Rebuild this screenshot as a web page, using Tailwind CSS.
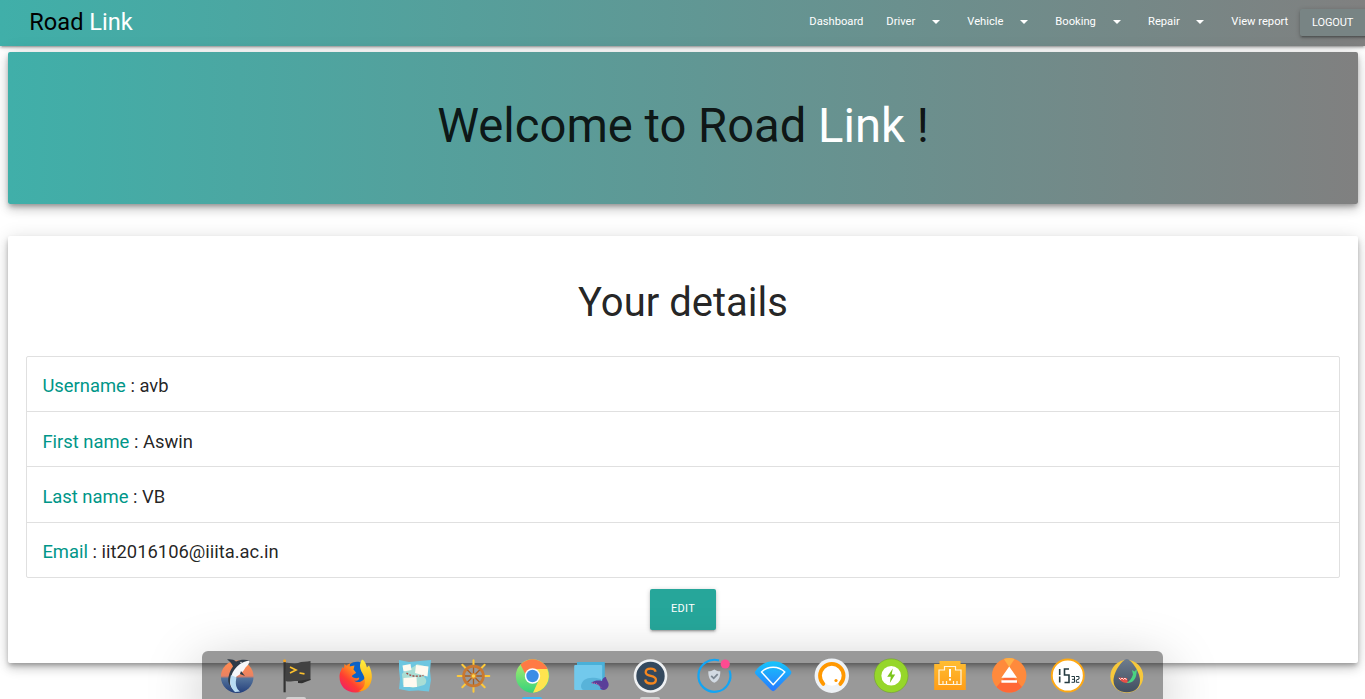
<!DOCTYPE html>
<html lang="en">
<head>
<meta charset="utf-8">
<title>Road Link</title>
<script src="https://cdn.jsdelivr.net/npm/@tailwindcss/browser@4"></script>
</head>
<body class="h-[699px] overflow-hidden bg-white font-['Roboto',sans-serif] text-black/87">
<nav class="flex h-[46px] overflow-hidden bg-linear-to-r/srgb from-[#40afa9] to-[#808080] text-[11.2px] leading-[44px] text-white shadow-[0_2px_2px_0_rgba(0,0,0,.14),0_3px_1px_-2px_rgba(0,0,0,.12),0_1px_5px_0_rgba(0,0,0,.2)]">
  <a class="pl-[29.3px] text-[23.6px] leading-[44px] whitespace-nowrap"><span class="text-black">Road</span> Link</a>
  <div class="ml-auto flex shrink-0 whitespace-nowrap -mr-[12px]">
    <a class="w-[77px] pl-[11.3px]">Dashboard</a>
    <a class="flex w-[81px] items-start pl-[11.3px]">Driver<svg class="mt-5 mr-4 ml-auto h-1 w-2" viewBox="0 0 8 4"><path d="M0 0h8L4 4z" fill="#fff"/></svg></a>
    <a class="flex w-[88px] items-start pl-[11.3px]">Vehicle<svg class="mt-5 mr-4 ml-auto h-1 w-2" viewBox="0 0 8 4"><path d="M0 0h8L4 4z" fill="#fff"/></svg></a>
    <a class="flex w-[93px] items-start pl-[11.3px]">Booking<svg class="mt-5 mr-4 ml-auto h-1 w-2" viewBox="0 0 8 4"><path d="M0 0h8L4 4z" fill="#fff"/></svg></a>
    <a class="flex w-[83px] items-start pl-[11px]">Repair<svg class="mt-5 mr-4 ml-auto h-1 w-2" viewBox="0 0 8 4"><path d="M0 0h8L4 4z" fill="#fff"/></svg></a>
    <a class="w-[80px] pl-[11.3px]">View report</a>
    <button class="mt-[9px] h-[27px] w-[77px] rounded-[2px] bg-[#788484] pl-[12px] text-left text-[11px] leading-[27px] tracking-[-.1px] shadow-[0_2px_2px_0_rgba(0,0,0,.14),0_3px_1px_-2px_rgba(0,0,0,.12),0_1px_5px_0_rgba(0,0,0,.2)]">LOGOUT</button>
  </div>
</nav>
<main class="px-2 pr-[7px] pt-[6px]">
  <section class="h-[152px] rounded-[2px] bg-linear-to-r/srgb from-[#40afa9] to-[#808080] pt-[44px] text-center shadow-[0_6px_10px_0_rgba(0,0,0,.14),0_1px_18px_0_rgba(0,0,0,.12),0_3px_5px_-1px_rgba(0,0,0,.3)]">
    <h1 class="text-[47.2px] leading-[60px]">Welcome to Road <span class="text-white">Link</span> !</h1>
  </section>
  <section class="mt-8 flex h-[427px] flex-col items-center rounded-[2px] bg-white px-[18px] pt-[41px] shadow-[0_6px_10px_0_rgba(0,0,0,.14),0_1px_18px_0_rgba(0,0,0,.12),0_3px_5px_-1px_rgba(0,0,0,.3)]">
    <h2 class="h-[79px] text-[40px] leading-[52px]">Your details</h2>
    <ul class="grid h-[222px] w-full grid-rows-[55px_55px_56px_54px] rounded-[2px] border border-[#e0e0e0] text-[18.4px] leading-[57px]">
      <li class="border-b border-[#e0e0e0] pl-[15.4px]"><span class="text-[#009688]">Username</span> : avb</li>
      <li class="border-b border-[#e0e0e0] pl-[15.4px] leading-[59px]"><span class="text-[#009688]">First name</span> : Aswin</li>
      <li class="border-b border-[#e0e0e0] pl-[15.4px] leading-[59px]"><span class="text-[#009688]">Last name</span> : VB</li>
      <li class="pl-[15.4px]"><span class="text-[#009688]">Email</span> : iit2016106@iiita.ac.in</li>
    </ul>
    <button class="mt-[11px] h-[41px] w-[66px] rounded-[2px] bg-[#26a69a] pb-[1px] text-[11px] leading-[16px] tracking-[.3px] text-white shadow-[0_2px_2px_0_rgba(0,0,0,.14),0_3px_1px_-2px_rgba(0,0,0,.12),0_1px_5px_0_rgba(0,0,0,.2)]">EDIT</button>
  </section>
</main>
<!-- desktop dock, floating over the page -->
<div class="absolute bottom-0 left-[202px] flex h-12 w-[961px] justify-between rounded-t-[6px] bg-black/40 pr-[6.5px] pl-[5.5px] pt-[5px] shadow-[0_16px_56px_0_rgba(0,0,0,.28)]">
  <div class="flex w-[472px] justify-around">
    <svg class="h-10 w-10" viewBox="0 0 40 40"><defs><linearGradient id="sea" x1="0" y1="0" x2="0" y2="1"><stop offset=".1" stop-color="#ff8a50"/><stop offset=".48" stop-color="#e98263"/><stop offset=".55" stop-color="#54739b"/><stop offset="1" stop-color="#24407c"/></linearGradient></defs><circle cx="20.200" cy="20.700" r="16.300" fill="url(#sea)"/><path d="M10 3.500c4-.5 7 .3 9 2 4-2 9-2.300 14-1L29 9c-5 0-9 4-12 9-2 4-3 8-3 13-3-4-3.500-7-2-12 .8-3 2-6 4-8.500-1-3-3-5-6-7z" fill="#2f3b48"/><path d="M32.500 4.500c0 3-2 5-4 7-2 4-5 7-9 9-3 3-3.500 8-1 14-5-2-6.500-7-4.500-13C15.500 15 19 11 23 8c3-2 6-3 9.500-3.500z" fill="#f5f7fa"/><path d="M14 19c-2 7 0 13 4 17l5-.5c-4-3-5-8-3.500-14z" fill="#b9dcf3"/><path d="m24 15 4 5-5-2z" fill="#2f3b48"/><circle cx="24" cy="6.500" r=".7" fill="#fff"/></svg>
    <svg class="h-10 w-10" viewBox="0 0 40 40"><path d="M9 7c5-1 8 2 13 0 4-2 8-1 12.500-2v19c-4 0-6 1-8 3l-4-2c-5-.5-9 1.500-13 0z" fill="#424242"/><path d="M22 25v2l4 .2L34.500 24v-1z" fill="#303030"/><path d="M7.500 6h2.200v30.300H7.500z" fill="#333"/><circle cx="8.600" cy="4.800" r="1.500" fill="#f5a623"/><path d="m14 11 6 3-6 3M23.500 17l5 .8" fill="none" stroke="#fbc02d" stroke-width="1.700"/></svg>
    <svg class="h-10 w-10" viewBox="0 0 40 40"><defs><linearGradient id="fox" x1="1" y1="0" x2="0" y2="1"><stop offset=".1" stop-color="#ffb52e"/><stop offset=".4" stop-color="#ff8a1f"/><stop offset=".65" stop-color="#ff3d32"/><stop offset="1" stop-color="#e9127c"/></linearGradient><linearGradient id="foxTail" x1="0" y1="0" x2="0" y2="1"><stop stop-color="#fff03d"/><stop offset="1" stop-color="#ff980e"/></linearGradient></defs><circle cx="21" cy="20" r="14" fill="url(#fox)"/><path d="M15 8c5-4 14-3 17 4 3 8-1 17-9 17-6 0-9-4-9-9z" fill="#0a62c8"/><path d="M9.500 8c2 2 3 2.500 5 2.500l5-1-1 4 2.500 3c-1 2-4 2-4 4 2 2 5 2 7 1 1 2-2 4-5 3 5 4 11 0 12-6l5-2c0 12-7 20-15.500 20C11 36.500 4.500 30 4.500 21c0-5 2-7 3-10 .5 1 1 1 1.500 1z" fill="url(#fox)"/><path d="M27 3.500c4 2 4 6 5 8l2-2c4 8 4 16-1 22-3 3-7 4-10 4 7-3 8-9 6-15-1.500-4-4-6-4-11 0-2 1-4.500 2-6z" fill="url(#foxTail)"/></svg>
    <svg class="h-10 w-10" viewBox="0 0 40 40"><path d="m5 4 10 2 11-1 11-1-1 11 1 9-2 11.500-11-1-9 .5-10-2 1-10-1-9z" fill="#6ec6e0"/><path d="M8 18c4-5 10-5 15-10l11 3-4 10c3 2 3 6 0 8l-11 3-10-3z" fill="#a9ded5"/><path d="m8.500 9.500 8-1.500 1 6-8 1.500zM22 9l12.500 1.500-1 10L21 17zM9.500 22l13-1 .5 10-13.500 0z" fill="#fffaf0"/><path d="M12.500 17c5 4 12 3.500 17 2.500" fill="none" stroke="#a4453e" stroke-width="1.300" stroke-dasharray="2 1.300"/></svg>
    <svg class="h-10 w-10" viewBox="0 0 40 40"><g stroke="#ffca3a" stroke-width="2" stroke-linecap="round"><path d="M20.500 4.200v31.600M4.700 20h31.600M9.300 8.800l22.400 22.400M31.700 8.800 9.300 31.200"/></g><circle cx="20.500" cy="20" r="10" fill="#999"/><path d="M20.500 10v20M10.500 20h20M13.400 13l14.200 14.200M27.600 13 13.400 27.200" stroke="#a75d20" stroke-width="1.300"/><circle cx="20.500" cy="20" r="9.900" fill="none" stroke="#c97830" stroke-width="2.700"/><circle cx="20.500" cy="20" r="3" fill="#d88a32"/><circle cx="20.500" cy="20" r="1.700" fill="#ffd54a"/></svg>
    <svg class="h-10 w-10" viewBox="0 0 40 40"><defs><linearGradient id="cg" x1="0" y1="0" x2="0" y2="1"><stop stop-color="#b6f06a"/><stop offset="1" stop-color="#36d27c"/></linearGradient></defs><circle cx="20.500" cy="20" r="16.700" fill="url(#cg)"/><path d="M20.500 13h14.700A16.700 16.700 0 0 1 21 36.700l6-13.200z" fill="#ffe44f"/><path d="M8.500 8.400A16.700 16.700 0 0 1 35.600 13H20.500c-4 0-6 2-7 5.500z" fill="#ff7a45"/><circle cx="20.500" cy="20" r="7.700" fill="#fff"/><circle cx="20.500" cy="20" r="6.200" fill="#3b8de6"/></svg>
    <svg class="h-10 w-10" viewBox="0 0 40 40"><path d="M6 6h27.800v26H6z" fill="#4ab0d8"/><rect x="3.200" y="9" width="28" height="25" rx="1" fill="#72c9ec"/><path d="M10 30c1-8 9-10 20-7l3 11H13c-2 0-3-2-3-4z" fill="#58b3d9"/><path d="M20 27c4-3 8-2.500 11-2 0-2 2-4 4-4 0 3 3.500 5 2.500 9-1.500 4-5 5-8 3 0-3-2-5-9.500-6z" fill="#5a3f99"/><path d="m21 27 5 .5 4 4" fill="none" stroke="#f06a9a" stroke-width=".8" stroke-dasharray="1 1"/></svg>
    <svg class="h-10 w-10" viewBox="0 0 40 40"><circle cx="20.500" cy="20" r="16.800" fill="#f0f2f4"/><circle cx="20.500" cy="20" r="14.200" fill="#34495e"/><path d="M25.600 15.800c-.4-2-2.200-3.100-5-3.100-3 0-4.900 1.400-4.900 3.600 0 5 10.200 2.300 10.200 7.400 0 2.300-2 3.800-5.100 3.800-3.200 0-5.300-1.400-5.600-4" fill="none" stroke="#f5871f" stroke-width="2.300"/></svg>
  </div>
  <div class="flex w-[472px] justify-around">
    <svg class="h-10 w-10" viewBox="0 0 40 40"><path d="M25 4.500A16 16 0 1 0 35.500 14.500" fill="none" stroke="#12a5f4" stroke-width="2.200"/><circle cx="31.200" cy="8" r="4.600" fill="#ff4b91"/><path d="M20.300 13.500c2 1.300 4 1.800 6 1.800 0 6-1.500 9.500-6 11.500-4.500-2-6-5.500-6-11.500 2 0 4-.5 6-1.800z" fill="#d2dae3"/><path d="m17.200 19.800 2.500 2.500 4-4.200" fill="none" stroke="#7c8792" stroke-width="1.800"/></svg>
    <svg class="h-10 w-10" viewBox="0 0 40 40"><defs><linearGradient id="wf" x1="0" y1="0" x2="0" y2="1"><stop stop-color="#17c5fa"/><stop offset="1" stop-color="#2979ff"/></linearGradient></defs><path d="M2.500 15C12 2 28.500 2 37.800 15c.9 1.300.7 2.200-.3 3.400L22.300 34c-1.500 1.500-2.800 1.500-4.300 0L2.800 18.400c-1-1.200-1.200-2.100-.3-3.400z" fill="url(#wf)"/><path d="M8.500 16c6-6.500 17.300-6.500 23.300 0L20.200 28.700z" fill="none" stroke="#fff" stroke-width="1.500" stroke-linejoin="round"/></svg>
    <svg class="h-10 w-10" viewBox="0 0 40 40"><circle cx="19.800" cy="19.700" r="17.200" fill="#eef2f6"/><circle cx="19.800" cy="19.700" r="10" fill="#fff"/><path d="M11.300 27.900a11.800 11.800 0 1 1 17 0" fill="none" stroke="#ff9800" stroke-width="3.800" stroke-linecap="round"/><circle cx="24" cy="24.500" r="1.600" fill="#ff9800"/></svg>
    <svg class="h-10 w-10" viewBox="0 0 40 40"><circle cx="20.200" cy="19.700" r="16.900" fill="#96d62a" stroke="#719d33" stroke-width=".6"/><circle cx="20.200" cy="19.700" r="9.800" fill="#fff"/><path d="m21.800 12.500-5.600 8.300h3.600l-1 6.200 5.400-8.600h-3.500z" fill="#7cc51b"/></svg>
    <svg class="h-10 w-10" viewBox="0 0 40 40"><defs><linearGradient id="eth" x1="0" y1="0" x2="0" y2="1"><stop stop-color="#ffbd32"/><stop offset="1" stop-color="#ff9d16"/></linearGradient></defs><path d="M9.500 5h21v3h5.300v26H4.200V8h5.300z" fill="url(#eth)"/><path d="M14.500 10.500h11V14H31v14.500H9V14h5.500zM13 28v-3M16.500 28v-3M23.500 28v-3M27 28v-3" fill="none" stroke="#fff5df" stroke-width="1.200"/><path d="M20 13v8M20 22.500v2" stroke="#fff" stroke-width="2"/></svg>
    <svg class="h-10 w-10" viewBox="0 0 40 40"><circle cx="20.200" cy="19.300" r="17.200" fill="#ff8a3c"/><path d="m20.200 16 12.700 15a17.200 17.200 0 0 1-25.400 0z" fill="#ff6836"/><path d="M14.800 3a17.200 17.200 0 0 1 10.800 0l-5.400 8z" fill="#ffb046"/><path d="m20.200 10.500 7.800 11.200H12.400zM12.400 24.300H28v2.500H12.400z" fill="#fff"/></svg>
    <svg class="h-10 w-10" viewBox="0 0 40 40"><circle cx="19.800" cy="19.500" r="16" fill="#fff" stroke="#ffa912" stroke-width="1.900"/><g fill="none" stroke="#233a40"><path d="M11.700 13v6M11.700 20.500v6M21 13h-4.500v6h4.500v7.500h-4.500" stroke-width="1.600"/><path d="M23.500 20.500h3v5.800h-3M24 23.300h2.500M28 20.500h3V23l-2.700 1v2.300h3" stroke-width="1"/></g></svg>
    <svg class="h-10 w-10" viewBox="0 0 40 40"><defs><linearGradient id="egg" x1="0" y1="0" x2="0" y2="1"><stop stop-color="#6e7c8d"/><stop offset="1" stop-color="#414e60"/></linearGradient></defs><circle cx="19.800" cy="20.300" r="16.400" fill="#f7c83b"/><path d="M19.800 3c5 1 13.200 13 13.200 21.500 0 7.500-5.500 11.800-13.200 11.800S6.500 32 6.500 24.500C6.500 16 14.800 4 19.800 3z" fill="url(#egg)"/><path d="M11 21.500 20 22l1 5c-4 0-7-1-10-5.500z" fill="#e84f47"/><path d="m12 22 1.500 1.500L15 22l1.500 1.500L18 22l1.500 2" stroke="#fff" stroke-width=".8" fill="none"/><path d="M19.500 27c3-2 5-4 6.500-8.500l-1-4.500 2.500 1.500 2.500-2.500-.5 4c-.5 6.500-4 10.500-10 10z" fill="#4bd381"/></svg>
  </div>
  <i class="absolute bottom-0 left-[84px] h-[2px] w-5 rounded-t bg-[#d0d0d0]"></i>
  <i class="absolute bottom-0 left-[320px] h-[2px] w-5 rounded-t bg-[#3db8f2]"></i>
  <i class="absolute bottom-0 left-[438px] h-[2px] w-5 rounded-t bg-[#d0d0d0]"></i>
</div>
</body>
</html>
